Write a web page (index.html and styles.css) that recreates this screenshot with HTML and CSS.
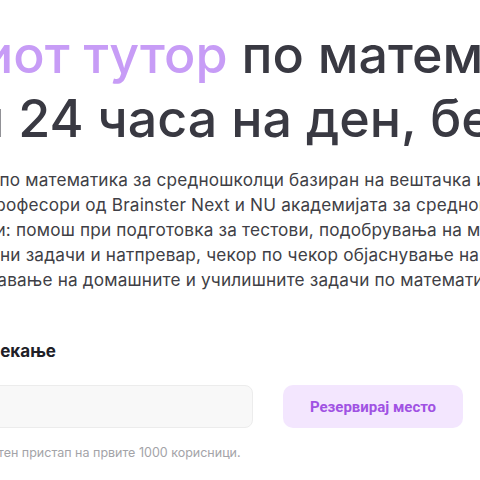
FILE: index.html
```html
<!DOCTYPE html>
<html lang="mk">
  <head>
    <meta charset="UTF-8" />
    <meta name="viewport" content="width=device-width, initial-scale=1.0" />
    <title>Тутор по математика</title>
    <link rel="stylesheet" href="styles.css">
  </head>
  <body>
    <section class="hero">
      <h1 class="title">
        <span class="line t1"><span class="accent">иот тутор</span> по математика</span>
        <span class="line t2">н 24 часа на ден, бесплатно</span>
      </h1>

      <p class="lead">
        <span class="line p1">к по математика за средношколци базиран на вештачка интелигенција</span>
        <span class="line p2">професори од Brainster Next и NU академијата за средношколци</span>
        <span class="line p3">ки: помош при подготовка за тестови, подобрувања на мат</span>
        <span class="line p4">ни задачи и натпревар, чекор по чекор објаснување на</span>
        <span class="line p5">шавање на домашните и училишните задачи по математика</span>
      </p>

      <form class="signup" onsubmit="return false">
        <label class="label" for="email">чекање</label>
        <div class="row">
          <input id="email" class="field" type="email" />
          <button class="btn" type="submit">Резервирај место</button>
        </div>
        <p class="note">Бесплатен пристап на првите 1000 корисници.</p>
      </form>
    </section>
  </body>
</html>
```

FILE: styles.css
```css
html, body {
  margin: 0;
  height: 100%;
  overflow: hidden;
  background: #ffffff;
  font-family: 'Inter', 'Noto Sans', sans-serif;
}
.hero {
  display: flex;
  flex-direction: column;
  padding-top: 23px;
}
.line {
  display: block;
  white-space: nowrap;
}
.title {
  margin: 0;
  font-size: 52px;
  font-weight: 500;
  line-height: 64px;
  color: #393942;
}
.accent {
  color: #c79cf6;
}
.t1 { margin-left: -18px; }
.t2 { margin-left: -27px; }

.lead {
  margin: 16px 0 0;
  font-size: 17.2px;
  letter-spacing: 0.18px;
  line-height: 25px;
  color: #3f3f46;
}
.p1 { margin-left: -15px; }
.p2 { margin-left: -15px; }
.p3 { margin-left: -14px; }
.p4 { margin-left: 0; }
.p5 { margin-left: -17px; }

.signup {
  display: flex;
  flex-direction: column;
  margin-top: 49px;
}
.label {
  font-size: 17px;
  font-weight: 700;
  color: #202027;
  margin-left: -10px;
}
.row {
  display: flex;
  align-items: center;
  gap: 30px;
  margin-top: 24px;
  margin-left: -20px;
}
.field {
  width: 273px;
  height: 43px;
  box-sizing: border-box;
  background: #f8f8f8;
  border: 1px solid #ececec;
  border-radius: 8px;
  outline: none;
}
.btn {
  width: 180px;
  height: 43px;
  border: none;
  border-radius: 10px;
  background: #f3e6fe;
  color: #a052e3;
  font-family: 'Roboto', 'Inter', sans-serif;
  font-size: 15px;
  font-weight: 700;
}
.note {
  margin: 17px 0 0 -46px;
  font-size: 12.5px;
  color: #a3a3a8;
  white-space: nowrap;
}
```
